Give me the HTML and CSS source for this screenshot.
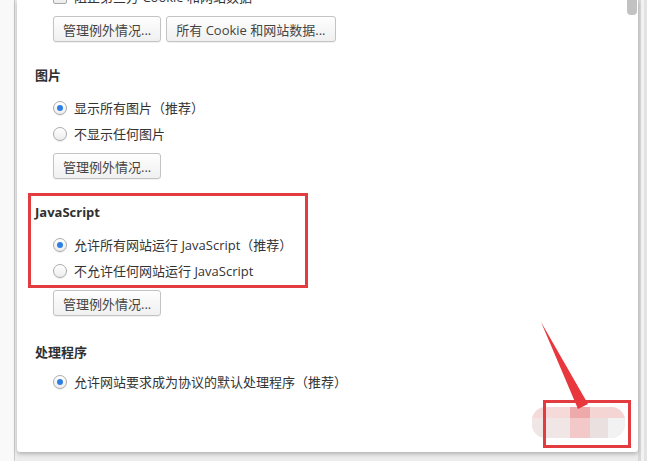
FILE: index.html
```html
<!DOCTYPE html>
<html lang="zh-CN">
<head>
<meta charset="utf-8">
<title>内容设置</title>
<link rel="stylesheet" href="styles.css">
</head>
<body>
<div class="screen">
  <div class="gutter"></div>
  <div class="gutter-line"></div>
  <div class="gutter-gap"></div>
  <div class="panel">
    <div class="content">
      <div class="option option-top">
        <span class="checkbox"></span>
        <span class="label">阻止第三方 Cookie 和网站数据</span>
      </div>
      <div class="buttons">
        <button class="btn">管理例外情况...</button>
        <button class="btn">所有 Cookie 和网站数据...</button>
      </div>

      <section class="section">
        <h3 class="heading">图片</h3>
        <div class="option"><span class="radio checked"></span><span class="label">显示所有图片（推荐）</span></div>
        <div class="option"><span class="radio"></span><span class="label">不显示任何图片</span></div>
        <div class="buttons"><button class="btn">管理例外情况...</button></div>
      </section>

      <section class="section">
        <h3 class="heading">JavaScript</h3>
        <div class="option"><span class="radio checked"></span><span class="label">允许所有网站运行 JavaScript（推荐）</span></div>
        <div class="option"><span class="radio"></span><span class="label">不允许任何网站运行 JavaScript</span></div>
        <div class="buttons"><button class="btn">管理例外情况...</button></div>
      </section>

      <section class="section section-last">
        <h3 class="heading">处理程序</h3>
        <div class="option"><span class="radio checked"></span><span class="label">允许网站要求成为协议的默认处理程序（推荐）</span></div>
      </section>
    </div>

    <div class="scroll-thumb"></div>

    <div class="mark-js"></div>
    <div class="mosaic">
      <span class="m m1"></span><span class="m m2"></span><span class="m m3"></span>
      <span class="m m4"></span><span class="m m5"></span><span class="m m6"></span><span class="m m7"></span>
    </div>
    <div class="mark-btn"></div>
    <svg class="arrow" width="60" height="100" viewBox="0 0 60 100">
      <polygon points="2,1 49,83 39,88" fill="#e8383d"/>
    </svg>
  </div>
  <div class="right-edge"></div>
</div>
</body>
</html>
```

FILE: styles.css
```css
html, body {
  margin: 0;
  padding: 0;
}
body {
  width: 647px;
  height: 461px;
  overflow: hidden;
  background: #ececec;
  font-family: "Open Sans", "Noto Sans CJK SC", sans-serif;
  font-size: 13px;
  color: #333;
}
.screen {
  display: flex;
  height: 461px;
  align-items: flex-start;
}
.gutter {
  width: 14px;
  height: 461px;
  background: #f9f9f9;
}
.gutter-line {
  width: 1px;
  height: 461px;
  background: #c9c9c9;
}
.gutter-gap {
  width: 2px;
  height: 461px;
  background: #eeeeee;
}
.panel {
  position: relative;
  width: 621px;
  height: 452px;
  background: #fff;
  border-radius: 0 0 3px 3px;
  box-shadow: 0 2px 4px rgba(0,0,0,0.25);
  overflow: hidden;
}
.right-edge {
  width: 9px;
  height: 461px;
  background: linear-gradient(to right, #d9d9d9 0, #d9d9d9 3px, #f2f2f2 3px, #f2f2f2 6px, #e3e3e3 6px);
}
.content {
  padding-left: 18px;
  margin-top: -16px;
}
.option {
  display: flex;
  align-items: center;
  height: 26px;
  padding-left: 18px;
}
.label {
  margin-left: 7px;
  line-height: 26px;
  white-space: nowrap;
}
.checkbox {
  width: 12px;
  height: 12px;
  border: 1px solid #a9a9a9;
  border-radius: 2px;
  background: linear-gradient(#fdfdfd, #ececec);
}
.radio {
  box-sizing: border-box;
  width: 14px;
  height: 14px;
  border: 1px solid #ababab;
  border-radius: 50%;
  background: linear-gradient(#ffffff, #ededed);
  box-shadow: 0 1px 1px rgba(0,0,0,0.08);
  display: flex;
  align-items: center;
  justify-content: center;
}
.radio.checked::after {
  content: "";
  width: 6px;
  height: 6px;
  border-radius: 50%;
  background: #2f7fe3;
}
.buttons {
  display: flex;
  gap: 5px;
  padding-left: 18px;
  margin-top: 6px;
}
.btn {
  height: 26px;
  padding: 0 9px;
  font-family: "Open Sans", "Noto Sans CJK SC", sans-serif;
  font-size: 13px;
  color: #444;
  background: linear-gradient(#fefefe, #f0f0f0);
  border: 1px solid #c3c3c3;
  border-radius: 3px;
  box-shadow: 0 1px 1px rgba(0,0,0,0.06);
}
.section {
  margin-top: 23px;
}
.heading {
  margin: 0 0 10px 0;
  font-size: 13px;
  font-weight: bold;
  line-height: 20px;
  color: #303030;
}
.section-last .heading {
  margin-bottom: 7px;
}
.section-last {
  margin-top: 26px;
}
.scroll-thumb {
  position: absolute;
  right: 1px;
  top: 0;
  width: 10px;
  height: 15px;
  background: #c2c2c2;
  border-radius: 0 0 4px 4px;
}
.mark-js {
  position: absolute;
  left: 11px;
  top: 193px;
  width: 274px;
  height: 89px;
  border: 3px solid #e23c40;
}
.mark-btn {
  position: absolute;
  left: 526px;
  top: 400px;
  width: 82px;
  height: 42px;
  border: 3px solid #e23c40;
}
.mosaic {
  position: absolute;
  left: 515px;
  top: 407px;
  width: 93px;
  height: 31px;
  border-radius: 14px;
  overflow: hidden;
  display: grid;
  grid-template-columns: 20px 18px 20px 18px 17px;
  grid-template-rows: 11px 20px;
  background: #f7dede;
}
.m1 { grid-column: 1 / 3; grid-row: 1; background: #f6d9d9; }
.m2 { grid-column: 3; grid-row: 1; background: #eeaaaa; }
.m3 { grid-column: 4 / 6; grid-row: 1; background: #f5d4d4; }
.m4 { grid-column: 1 / 3; grid-row: 2; background: #f0e6e6; }
.m5 { grid-column: 3; grid-row: 2; background: #f3c8c8; }
.m6 { grid-column: 4; grid-row: 2; background: #eae0e0; }
.m7 { grid-column: 5; grid-row: 2; background: #f2f2f2; }
.m { display: block; }
.arrow {
  position: absolute;
  left: 522px;
  top: 321px;
}
```
